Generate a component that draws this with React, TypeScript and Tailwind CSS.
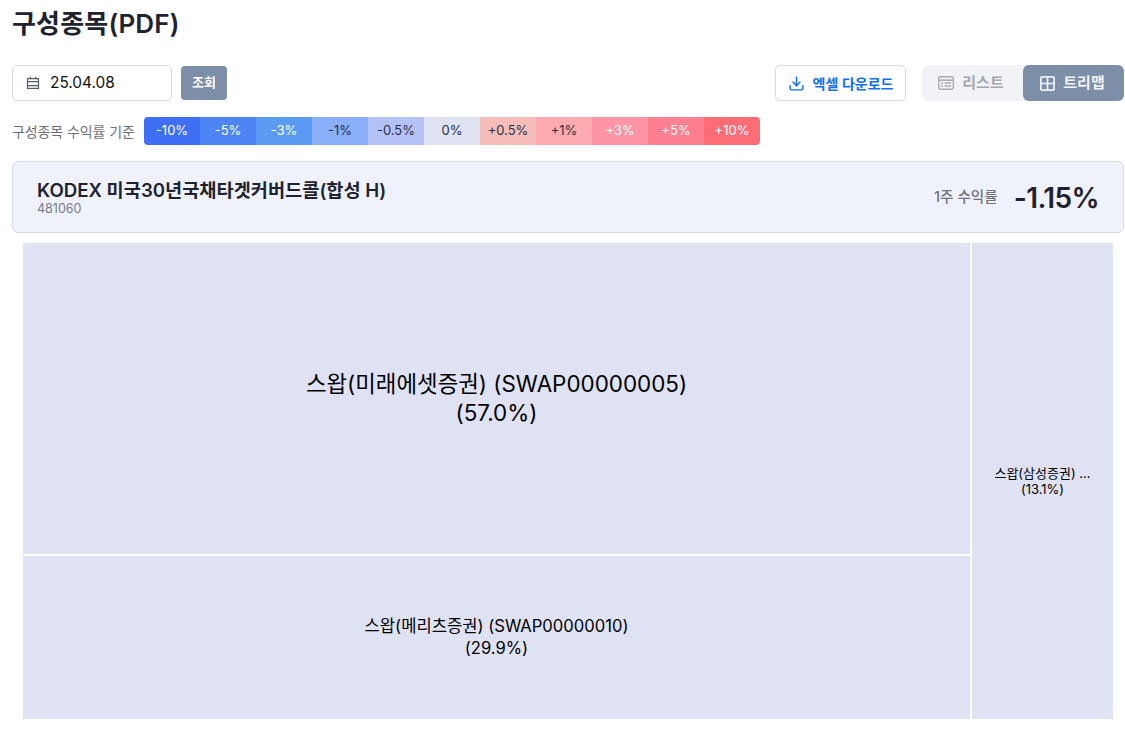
import { Download } from "lucide-react";

const legend = [
  { label: "-10%", bg: "bg-[#3f6ff5]", text: "text-white" },
  { label: "-5%", bg: "bg-[#4d85f6]", text: "text-white" },
  { label: "-3%", bg: "bg-[#5b9af3]", text: "text-white" },
  { label: "-1%", bg: "bg-[#8aaef7]", text: "text-[#2a3142]" },
  { label: "-0.5%", bg: "bg-[#b3c1f6]", text: "text-[#2a3142]" },
  { label: "0%", bg: "bg-[#dfe2f3]", text: "text-[#2a3142]" },
  { label: "+0.5%", bg: "bg-[#f6bcb8]", text: "text-[#2a3142]" },
  { label: "+1%", bg: "bg-[#fdaab0]", text: "text-[#2a3142]" },
  { label: "+3%", bg: "bg-[#fe95a6]", text: "text-white" },
  { label: "+5%", bg: "bg-[#fe8090]", text: "text-white" },
  { label: "+10%", bg: "bg-[#fe6d76]", text: "text-white" },
];

function CalendarIcon() {
  return (
    <svg width="14" height="14" viewBox="0 0 14 14" fill="none" stroke="#555b66" strokeWidth="1.2">
      <rect x="1.5" y="2.6" width="11" height="9.8" />
      <path d="M1.5 5.6h11M1.5 9.6h11M4.3 0.8v2.4M9.7 0.8v2.4" />
    </svg>
  );
}

function ListIcon() {
  return (
    <svg width="16" height="14" viewBox="0 0 16 14" fill="none">
      <rect x="0.7" y="0.7" width="14.6" height="12.6" rx="1.5" stroke="#a9adb5" strokeWidth="1.4" />
      <path d="M1 4.2h14" stroke="#a9adb5" strokeWidth="1.6" />
      <path d="M3 7h2M3 10h2M6.5 7h6.5M6.5 10h6.5" stroke="#a9adb5" strokeWidth="1.4" />
    </svg>
  );
}

function TreemapIcon() {
  return (
    <svg width="15" height="15" viewBox="0 0 14 14" fill="none" stroke="#eef0f5" strokeWidth="1.6">
      <rect x="0.8" y="0.8" width="12.4" height="12.4" rx="1" />
      <path d="M7 1v12M1 7h12" />
    </svg>
  );
}

export default function App() {
  return (
    <div className="bg-white pl-3 pr-px font-['Inter','Noto_Sans_CJK_KR',sans-serif] text-[#1f2330] h-[729px] overflow-hidden">
      <h1 className="pt-[7px] text-[26px] leading-[34px] font-semibold tracking-[0.2px]">구성종목(PDF)</h1>

      <div className="mt-[24px] flex items-center h-9">
        <div className="flex h-9 w-40 items-center gap-[10px] rounded-[5px] border border-[#d6d9e8] pl-[13px] text-[15.4px] font-normal text-[#111]">
          <CalendarIcon />
          <span>25.04.08</span>
        </div>
        <button className="ml-[9px] h-[34px] w-[46px] rounded-[4px] bg-[#7c8ea8] text-[13px] font-semibold text-white">조회</button>
        <button className="ml-auto flex h-9 w-[131px] items-center justify-center gap-2 rounded-[5px] border border-[#d6d9e8] text-[14px] font-semibold text-[#0f6fef]">
          <Download size={17} strokeWidth={2} />
          <span>엑셀 다운로드</span>
        </button>
        <div className="ml-[16px] flex h-9 w-[202px] rounded-[6px] bg-[#f1f3f6]">
          <div className="flex w-[101px] items-center justify-center gap-2 pr-[3px] text-[15px] font-semibold text-[#a3a7af]">
            <ListIcon />
            <span>리스트</span>
          </div>
          <div className="flex w-[101px] items-center justify-center gap-2 pr-[2px] rounded-[6px] bg-[#7c8ea8] text-[15px] font-semibold text-[#f3f4f7]">
            <TreemapIcon />
            <span>트리맵</span>
          </div>
        </div>
      </div>

      <div className="mt-4 flex h-7 items-center">
        <span className="w-[132px] text-[14px] tracking-[-0.1px] text-[#6b6f78] whitespace-nowrap">구성종목 수익률 기준</span>
        <div className="flex overflow-hidden rounded-[4px]">
          {legend.map((item) => (
            <div key={item.label} className={`flex h-7 w-14 items-center justify-center text-[13px] ${item.bg} ${item.text}`}>
              {item.label}
            </div>
          ))}
        </div>
      </div>

      <div className="mt-4 flex h-[72px] items-center justify-between rounded-[6px] border border-[#d9dcea] bg-[#eff2fb] pl-6 pr-6">
        <div>
          <div className="text-[18.65px] leading-[22px] font-semibold">KODEX 미국30년국채타겟커버드콜(합성 H)</div>
          <div className="mt-px text-[12.5px] leading-[14px] text-[#777b84]">481060</div>
        </div>
        <div className="flex items-center gap-4 pt-[2px]">
          <span className="text-[14.6px] font-medium text-[#6f737c]">1주 수익률</span>
          <span className="text-[28px] leading-8 font-semibold tracking-[-0.6px]">-1.15%</span>
        </div>
      </div>

      <div className="mt-[10px] ml-[11px] mr-[11px] flex h-[476px] gap-[2px] text-center text-black">
        <div className="flex w-[947px] flex-col gap-[2px]">
          <div className="flex h-[311px] items-center justify-center bg-[#dfe2f3] pb-[2px] text-[22.4px] leading-[29px]">
            <div>
              스왑(미래에셋증권) (SWAP00000005)
              <br />
              (57.0%)
            </div>
          </div>
          <div className="flex flex-1 items-center justify-center bg-[#dfe2f3] pb-[2px] text-[16.6px] leading-[22px]">
            <div>
              스왑(메리츠증권) (SWAP00000010)
              <br />
              (29.9%)
            </div>
          </div>
        </div>
        <div className="flex flex-1 items-center justify-center bg-[#dfe2f3] text-[13px] leading-[16px]">
          <div>
            스왑(삼성증권) ...
            <br />
            (13.1%)
          </div>
        </div>
      </div>
    </div>
  );
}
